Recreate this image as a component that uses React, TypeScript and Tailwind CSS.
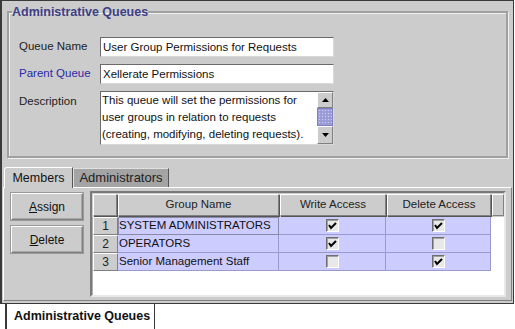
import React from "react";

const font = { fontFamily: '"Liberation Sans", Arial, sans-serif' };

function Check({ on }: { on: boolean }) {
  return (
    <div className="w-[13px] h-[13px] bg-[#e8e8e8] border-t border-l border-[#6e6e6e] border-r border-b border-r-[#ffffff] border-b-[#ffffff] shadow-[inset_1px_1px_0_#a0a0a0] flex items-center justify-center">
      {on && (
        <svg width="9" height="9" viewBox="0 0 9 9">
          <path d="M1 4 L3 7 L8 2" stroke="#000" strokeWidth="2" fill="none" />
        </svg>
      )}
    </div>
  );
}

function Btn({ label }: { label: string }) {
  return (
    <div className="w-[72px] h-[27px] bg-[#cccccc] border border-t-[#ffffff] border-l-[#ffffff] border-r-[#808080] border-b-[#808080] shadow-[inset_-1px_-1px_0_#a8a8a8,0_0_0_1px_#999] flex items-center justify-center text-[12px] text-[#111]">
      <span>
        <span className="underline">{label[0]}</span>
        {label.slice(1)}
      </span>
    </div>
  );
}

const rows = [
  { n: 1, name: "SYSTEM ADMINISTRATORS", w: true, d: true },
  { n: 2, name: "OPERATORS", w: true, d: false },
  { n: 3, name: "Senior Management Staff", w: false, d: true },
];

const inputCls =
  "w-[234px] h-[20px] bg-white border border-[#6a6a6a] border-b-[#d8d8d8] border-r-[#d8d8d8] px-[2px] text-[11.5px] leading-[18px] text-[#111] whitespace-nowrap overflow-hidden";

export default function App() {
  return (
    <div className="w-[515px] h-[329px] bg-white flex flex-col overflow-hidden" style={font}>
      <div className="w-[514px] h-[304px] bg-[#cccccc] border-t border-l-2 border-r border-b border-[#3a3a3a] flex flex-col">
        {/* group box */}
        <fieldset className="mx-[5px] mt-[2px] h-[157px] border-2 border-[#a0a0a0] shadow-[1px_1px_0_#f0f0f0,inset_1px_1px_0_#f0f0f0] pl-[3px] pr-[8px] flex flex-col">
          <legend className="text-[12.5px] font-bold text-[#3e3e86] leading-[18px] px-0 whitespace-nowrap">Administrative Queues</legend>
          <div className="flex flex-col gap-[7px] mt-[16px] ml-[7px]">
            <div className="flex items-center">
              <div className="w-[81px] text-[11.5px] text-[#222] whitespace-nowrap">Queue Name</div>
              <div className={inputCls}>User Group Permissions for Requests</div>
            </div>
            <div className="flex items-center">
              <div className="w-[81px] text-[11.5px] text-[#2a2aa8] whitespace-nowrap">Parent Queue</div>
              <div className={inputCls}>Xellerate Permissions</div>
            </div>
            <div className="flex items-start">
              <div className="w-[81px] text-[11.5px] text-[#222] pt-[2px]">Description</div>
              <div className="w-[234px] h-[54px] bg-white border border-[#6a6a6a] border-b-[#d8d8d8] border-r-[#d8d8d8] flex">
                <div className="flex-1 px-[1px] text-[11.5px] leading-[17px] text-[#111] whitespace-nowrap overflow-hidden">
                  This queue will set the permissions for
                  <br />
                  user groups in relation to requests
                  <br />
                  (creating, modifying, deleting requests).
                </div>
                <div className="w-[16px] flex flex-col bg-[#d8d8d8]">
                  <div className="h-[16px] bg-[#cccccc] border border-t-white border-l-white border-r-[#808080] border-b-[#808080] flex items-center justify-center">
                    <svg width="7" height="4" viewBox="0 0 7 4"><path d="M3.5 0 L7 4 L0 4 Z" fill="#000" /></svg>
                  </div>
                  <div className="h-[18px] bg-[#9c9cd8] border border-[#8080c0] bg-[radial-gradient(#d0d0ff_1px,transparent_1px)] bg-[length:3px_3px]" />
                  <div className="flex-1 bg-[#cccccc] border border-t-white border-l-white border-r-[#808080] border-b-[#808080] flex items-center justify-center">
                    <svg width="7" height="4" viewBox="0 0 7 4"><path d="M0 0 L7 0 L3.5 4 Z" fill="#000" /></svg>
                  </div>
                </div>
              </div>
            </div>
          </div>
        </fieldset>

        {/* tabs */}
        <div className="flex mt-[8px] ml-[2px] h-[21px] items-end">
          <div className="h-[21px] w-[69px] bg-[#cccccc] border-t border-l border-white border-r border-r-[#555] rounded-tl-[3px] flex items-center justify-center text-[12.5px] text-[#111] relative z-10 -mb-px">
            Members
          </div>
          <div className="h-[19px] w-[96px] bg-[#a4a4a4] border-t border-l border-[#e0e0e0] border-r border-r-[#555] flex items-center justify-center text-[13px] text-[#222]">
            Administrators
          </div>
        </div>

        {/* tab content */}
        <div className="flex-1 mx-[1px] mb-[2px] border-t border-l border-white border-r border-b border-r-[#808080] border-b-[#808080] flex pl-[7px] pt-[3px] pr-[5px] pb-[3px] gap-[7px]">
          <div className="flex flex-col gap-[6px] pt-[2px]">
            <Btn label="Assign" />
            <Btn label="Delete" />
          </div>
          <div className="flex-1 h-[106px] bg-white border-2 border-[#7a7a7a] border-b-[#e8e8e8] border-r-[#e8e8e8] shadow-[inset_1px_1px_0_#b0b0b0]">
            <div className="flex h-[24px] bg-[#cccccc] pt-[1px] pl-[1px]">
              <div className="w-[24px] h-[22px] border border-t-white border-l-white border-r-[#808080] border-b-[#808080] shadow-[1px_1px_0_#555]" />
              <div className="w-[161px] h-[22px] ml-[1px] border border-t-white border-l-white border-r-[#808080] border-b-[#808080] shadow-[1px_1px_0_#555] flex items-center justify-center text-[11.5px] text-[#222]">Group Name</div>
              <div className="w-[106px] h-[22px] ml-[1px] border border-t-white border-l-white border-r-[#808080] border-b-[#808080] shadow-[1px_1px_0_#555] flex items-center justify-center text-[11.5px] text-[#222]">Write Access</div>
              <div className="w-[104px] h-[22px] ml-[1px] border border-t-white border-l-white border-r-[#808080] border-b-[#808080] shadow-[1px_1px_0_#555] flex items-center justify-center text-[11.5px] text-[#222]">Delete Access</div>
              <div className="flex-1 h-[22px] ml-[1px] border border-t-white border-l-white border-r-[#808080] border-b-[#808080]" />
            </div>
            {rows.map((r) => (
              <div key={r.n} className="flex h-[18px] pl-[1px]">
                <div className="w-[25px] h-[18px] bg-[#cccccc] border border-t-white border-l-white border-r-[#808080] border-b-[#808080] flex items-center justify-center text-[12px] text-[#222]">
                  {r.n}
                </div>
                <div
                  className={
                    "w-[161px] h-[18px] bg-[#ccccff] border-b border-r border-[#9a9ad0] flex items-center pl-[1px] text-[11.5px] text-[#111] whitespace-nowrap " +
                    (r.n === 1 ? "outline outline-1 outline-[#8a8aa8] -outline-offset-1" : "")
                  }
                >
                  {r.name}
                </div>
                <div className="w-[107px] h-[18px] bg-[#ccccff] border-b border-r border-[#9a9ad0] flex items-center justify-center">
                  <Check on={r.w} />
                </div>
                <div className="w-[105px] h-[18px] bg-[#ccccff] border-b border-r border-[#9a9ad0] flex items-center justify-center">
                  <Check on={r.d} />
                </div>
              </div>
            ))}
          </div>
        </div>
      </div>
      <div className="ml-[5px] w-[150px] h-[25px] border-l-2 border-r border-[#3a3a3a] bg-white flex items-center pl-[7px] text-[12.5px] font-bold text-[#111] whitespace-nowrap">
        Administrative Queues
      </div>
    </div>
  );
}
